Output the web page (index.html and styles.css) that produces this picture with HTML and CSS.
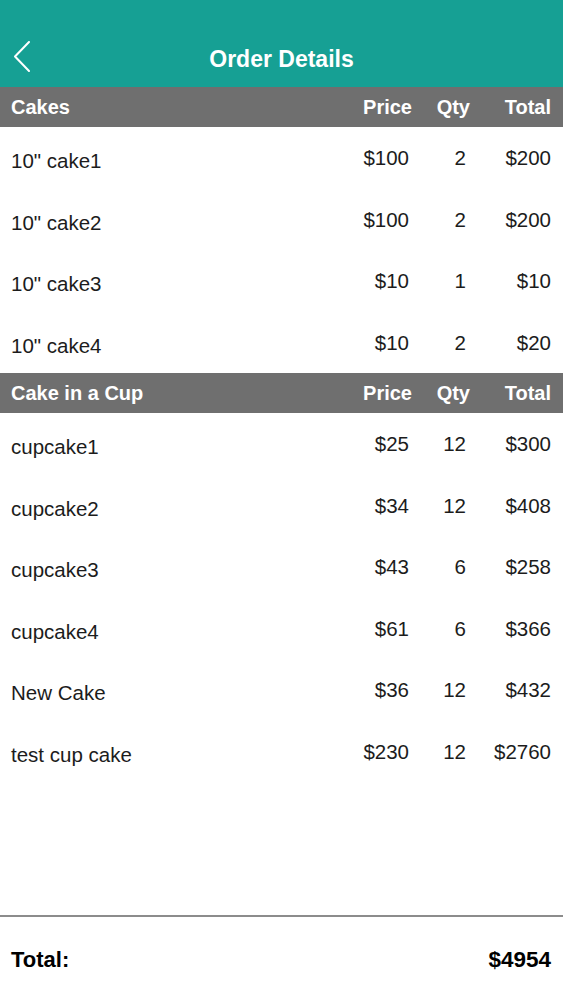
FILE: index.html
```html
<!DOCTYPE html>
<html lang="en">
<head>
    <meta charset="UTF-8">
    <meta name="viewport" content="width=device-width, initial-scale=1.0">
    <title>Order Details</title>
    <link rel="stylesheet" href="styles.css">
</head>
<body>
    <header class="nav-bar">
        <button class="back-btn" type="button" aria-label="Back">
            <svg width="17" height="31" viewBox="0 0 17 31">
                <path d="M16 1 L2 15.5 L16 30" fill="none" stroke="#fff" stroke-width="2" stroke-linecap="round" stroke-linejoin="round"/>
            </svg>
        </button>
        <h1>Order Details</h1>
        <span></span>
    </header>

    <main class="order-list">
        <section class="order-section">
            <div class="row section-head">
                <span class="name">Cakes</span>
                <span class="price">Price</span>
                <span class="qty">Qty</span>
                <span class="total">Total</span>
            </div>
            <div class="row">
                <span class="name">10" cake1</span>
                <span class="price">$100</span>
                <span class="qty">2</span>
                <span class="total">$200</span>
            </div>
            <div class="row">
                <span class="name">10" cake2</span>
                <span class="price">$100</span>
                <span class="qty">2</span>
                <span class="total">$200</span>
            </div>
            <div class="row">
                <span class="name">10" cake3</span>
                <span class="price">$10</span>
                <span class="qty">1</span>
                <span class="total">$10</span>
            </div>
            <div class="row">
                <span class="name">10" cake4</span>
                <span class="price">$10</span>
                <span class="qty">2</span>
                <span class="total">$20</span>
            </div>
        </section>

        <section class="order-section">
            <div class="row section-head">
                <span class="name">Cake in a Cup</span>
                <span class="price">Price</span>
                <span class="qty">Qty</span>
                <span class="total">Total</span>
            </div>
            <div class="row">
                <span class="name">cupcake1</span>
                <span class="price">$25</span>
                <span class="qty">12</span>
                <span class="total">$300</span>
            </div>
            <div class="row">
                <span class="name">cupcake2</span>
                <span class="price">$34</span>
                <span class="qty">12</span>
                <span class="total">$408</span>
            </div>
            <div class="row">
                <span class="name">cupcake3</span>
                <span class="price">$43</span>
                <span class="qty">6</span>
                <span class="total">$258</span>
            </div>
            <div class="row">
                <span class="name">cupcake4</span>
                <span class="price">$61</span>
                <span class="qty">6</span>
                <span class="total">$366</span>
            </div>
            <div class="row">
                <span class="name">New Cake</span>
                <span class="price">$36</span>
                <span class="qty">12</span>
                <span class="total">$432</span>
            </div>
            <div class="row">
                <span class="name">test cup cake</span>
                <span class="price">$230</span>
                <span class="qty">12</span>
                <span class="total">$2760</span>
            </div>
        </section>
    </main>

    <footer class="order-total">
        <span>Total:</span>
        <span class="grand">$4954</span>
    </footer>
</body>
</html>
```

FILE: styles.css
```css
body {
    font-family: 'Liberation Sans', Arial, sans-serif;
    background-color: #fff;
    color: #1c1c1c;
    margin: 0;
    padding: 0;
    height: 100vh;
    display: flex;
    flex-direction: column;
}

.nav-bar {
    background-color: #16a094;
    height: 87px;
    box-sizing: border-box;
    padding: 30px 13px 0;
    display: grid;
    grid-template-columns: 1fr auto 1fr;
    align-items: center;
}

.nav-bar h1 {
    margin: 0;
    color: #fff;
    font-size: 23px;
    line-height: 26px;
    font-weight: bold;
    text-align: center;
}

.back-btn {
    justify-self: start;
    background: none;
    border: none;
    padding: 0;
    margin-top: -4px;
    cursor: pointer;
    display: flex;
}

.order-list {
    flex: 1;
}

.row {
    display: grid;
    grid-template-columns: 1fr 80px 57px 85px;
    align-items: start;
    height: 61.5px;
    padding: 0 12px 0 11px;
    font-size: 20.5px;
    line-height: 22px;
}

.row .price,
.row .qty,
.row .total {
    text-align: right;
    padding-top: 20px;
}

.row .name {
    padding-top: 23px;
}

.section-head {
    height: 40px;
    align-items: center;
    background-color: #6f6f6f;
    color: #fff;
    font-size: 20px;
    line-height: 24px;
    font-weight: bold;
}

.section-head .name,
.section-head .price,
.section-head .qty,
.section-head .total {
    padding-top: 0;
}

.section-head .price {
    margin-right: -3px;
}

.section-head .qty {
    margin-right: -4px;
}

.order-total {
    height: 85px;
    box-sizing: border-box;
    border-top: 2px solid #8c8c8c;
    padding: 3px 12px 0 11px;
    display: flex;
    justify-content: space-between;
    align-items: center;
    font-size: 22px;
    font-weight: bold;
    color: #000;
}

.order-total .grand {
    font-size: 22.5px;
}
```
